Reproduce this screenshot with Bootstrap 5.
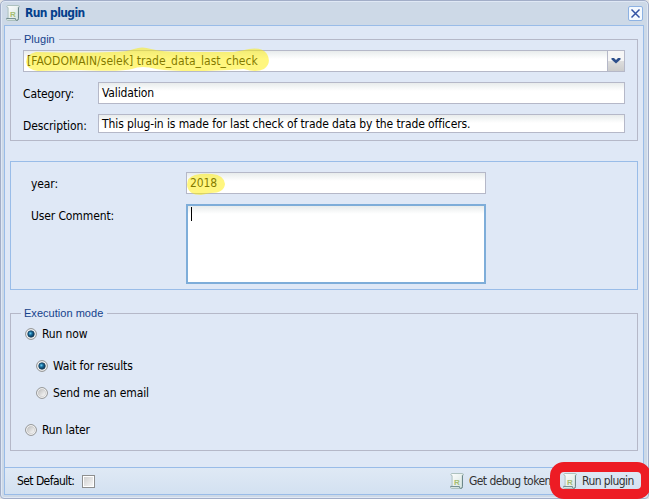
<!DOCTYPE html>
<html lang="en">
<head>
<meta charset="utf-8">
<title>Run plugin</title>
<link href="https://cdn.jsdelivr.net/npm/bootstrap@5.3.0/dist/css/bootstrap.min.css" rel="stylesheet">
<style>
body{width:649px;height:499px;overflow:hidden;background:#e6e6e6;color:#000;font:12px/16px "DejaVu Sans Condensed","DejaVu Sans",sans-serif;font-stretch:condensed;letter-spacing:-.12px}
.win{width:649px;height:499px;background:#cdd9e7;border:1px solid #a2aec8;border-radius:5px 5px 4px 4px;box-shadow:inset 0 0 0 1px #dfe8f5;padding:0 4px 3px 3px}
.win-head{height:24px;padding:0 1px 0 2px;color:#04408c;font-weight:700}
.win-head .ttl{margin-left:5px;letter-spacing:-.6px}
.win-close{width:15px;height:15px;border:1px solid #8db2e3;border-radius:2px;background:#f4f9ff;padding:0;line-height:0}
.win-body{height:442px;border:1px solid #99bce8;border-bottom:0;background:#dfe8f6;padding:13px 5px 0}
.win-foot{height:28px;border:1px solid #99bce8;background:linear-gradient(#dfe9f5,#d3e1f1);padding:0 7px 0 12px;letter-spacing:-.57px}
.fs{position:relative;border:1px solid #b5b8c8;width:628px}
.fs-title{position:absolute;top:-9px;left:10px;background:#dfe8f6;padding:0 4px 0 3px;color:#15428b;font:11px/16px "Liberation Sans",Arial,sans-serif;letter-spacing:.03px;white-space:nowrap}
.box{border:1px solid #b5b8c8;background:linear-gradient(#e8ecec,#fff 8px);padding:0 3px;height:22px;line-height:20px;white-space:nowrap;position:relative}
.t1{letter-spacing:.03px}
.t3{letter-spacing:-.1px}
.plug{height:102px;padding:10px 12px 0}
.plug .lbl{width:75px;padding-top:4px}
.opts{height:129px;margin-top:20px;border-color:#99bce8;padding:10px 20px 0}
.opts .lbl{width:155px;padding-top:4px}
.area{height:80px;width:300px;border:2px solid #7eadd9}
.caret{width:1px;height:14px;background:#000;margin:1px 0 0 0}
.exec{height:138px;margin-top:23px;padding:12px 14px 0}
.trig{width:17px;margin:0 -3px 0 auto;border-left:1px solid #b5b8c8;background:linear-gradient(#f6f6f6 48%,#ddd 52%,#ccc)}
.rad{height:16px;gap:5px}
.hl{position:absolute;pointer-events:none;overflow:visible}
.ring{position:absolute;left:550px;top:462px;width:101px;height:37px;border:10px solid #ed1c24;border-radius:14px}
.chk{width:13px;height:13px;border:1px solid #8e8f8f;box-shadow:inset 0 0 0 1px #fff;background:linear-gradient(135deg,#ccc,#fafafa)}
.tb{color:#333}
svg{flex:none;display:block}
</style>
<script src="https://cdn.jsdelivr.net/npm/bootstrap@5.3.0/dist/js/bootstrap.bundle.min.js"></script>
</head>
<body>
<svg width="0" height="0" class="position-absolute">
<defs>
<linearGradient id="gp" x1="0" y1="0" x2="1" y2="1"><stop offset="0" stop-color="#fff"/><stop offset="1" stop-color="#d3e3df"/></linearGradient>
<radialGradient id="gb" cx=".4" cy=".4" r=".6"><stop offset="0" stop-color="#6fd3f5"/><stop offset=".45" stop-color="#176a9c"/><stop offset="1" stop-color="#0b3350"/></radialGradient>
<linearGradient id="gr" x1="0" y1="0" x2="1" y2="1"><stop offset="0" stop-color="#bbb"/><stop offset="1" stop-color="#fff"/></linearGradient>
<symbol id="scroll" viewBox="0 0 14 16"><path d="M1.5.5h11q1 .1 1 1.5h-1.2v11.5q0 2-1.6 2H1.6Q.1 15.3.5 13.2h1.6V2.6Q.8 2.6.9 1.2z" fill="url(#gp)" stroke="#a6bcb9" stroke-width=".9"/><path d="M.5 13.6h9q0 1.8 1.2 1.9 1.8 0 1.8-2.1V2.4" fill="none" stroke="#6c878a"/><text x="4" y="12" font-family="Liberation Sans, sans-serif" font-weight="700" font-size="8" letter-spacing="0" fill="#a4bd72">R</text></symbol>
<symbol id="roff" viewBox="0 0 12 12"><circle cx="6" cy="6" r="5.4" fill="#fff" stroke="#8e8f8f"/><circle cx="6" cy="6" r="3.8" fill="url(#gr)" stroke="#c2c2c2" stroke-width=".6"/></symbol>
<symbol id="ron" viewBox="0 0 12 12"><circle cx="6" cy="6" r="5.4" fill="#f4f4f4" stroke="#8e8f8f"/><circle cx="6" cy="6" r="3.3" fill="url(#gb)" stroke="#183f5c" stroke-width=".7"/></symbol>
</defs></svg>
<div class="win">
  <div class="win-head d-flex align-items-center">
    <svg width="14" height="16"><use href="#scroll"/></svg><span class="ttl">Run plugin</span>
    <button class="win-close ms-auto" aria-label="Close"><svg width="13" height="13" viewBox="0 0 13 13"><path d="M2.5 2.5l8 8M10.500 2.5l-8 8" stroke="#3353a4" stroke-width="1.5"/></svg></button>
  </div>
  <div class="win-body">
    <section class="fs plug">
      <span class="fs-title">Plugin</span>
      <div class="box d-flex" style="width:602px"><span class="t1">[FAODOMAIN/selek] trade_data_last_check</span>
        <span class="trig"><svg width="16" height="20" viewBox="0 0 16 20"><path d="M3.500 7h2.500l2 2 2-2h2.500v1.500l-4.500 4-4.500-4z" fill="#2d4f8b"/></svg></span>
        <svg class="hl" style="left:2px;top:-3px" width="244" height="25"><path d="M10 4Q55 5 85 4 101 4 108 1 116-2 125 1 136 4 156 4H208Q219 2 223 1 236-1 241 6 246 15 238 21 230 25 218 21 160 25 130 21 116 17 106 21 96 24 50 22L12 23Q1 22 0 14 0 6 10 4z" fill="#ffee00" fill-opacity=".5"/></svg>
      </div>
      <div class="d-flex" style="margin-top:10px"><span class="lbl">Category:</span><div class="box" style="width:527px">Validation</div></div>
      <div class="d-flex" style="margin-top:10px"><span class="lbl">Description:</span><div class="box t3" style="width:527px;height:19px;line-height:18px">This plug-in is made for last check of trade data by the trade officers.</div></div>
    </section>
    <section class="fs opts">
      <div class="d-flex"><span class="lbl">year:</span><div class="box" style="width:300px">2018
        <svg class="hl" style="left:0;top:0" width="40" height="22"><path d="M8 2Q16 0 25 1 37 2 38 11 37 20 24 20L14 22Q1 22 0 12 0 4 8 2z" fill="#ffee00" fill-opacity=".5"/></svg></div></div>
      <div class="d-flex" style="margin-top:10px"><span class="lbl">User Comment:</span><div class="box area"><div class="caret"></div></div></div>
    </section>
    <section class="fs exec">
      <span class="fs-title">Execution mode</span>
      <div class="rad d-flex align-items-center"><svg width="12" height="12"><use href="#ron"/></svg>Run now</div>
      <div class="rad d-flex align-items-center" style="margin:16px 0 0 11px"><svg width="12" height="12"><use href="#ron"/></svg>Wait for results</div>
      <div class="rad d-flex align-items-center" style="margin:11px 0 0 11px"><svg width="12" height="12"><use href="#roff"/></svg>Send me an email</div>
      <div class="rad d-flex align-items-center" style="margin-top:21px"><svg width="12" height="12"><use href="#roff"/></svg>Run later</div>
    </section>
  </div>
  <div class="win-foot d-flex align-items-center">
    <span style="width:57px" class="text-nowrap">Set Default:</span><span class="chk ms-2"></span>
    <span class="tb d-flex ms-auto" style="width:113px"><svg width="14" height="16"><use href="#scroll"/></svg><span class="text-nowrap" style="margin-left:5px">Get debug token</span></span>
    <span class="tb d-flex" style="width:73px"><svg width="14" height="16"><use href="#scroll"/></svg><span class="text-nowrap" style="margin-left:5px">Run plugin</span></span>
  </div>
</div>
<div class="ring"></div>
</body>
</html>
